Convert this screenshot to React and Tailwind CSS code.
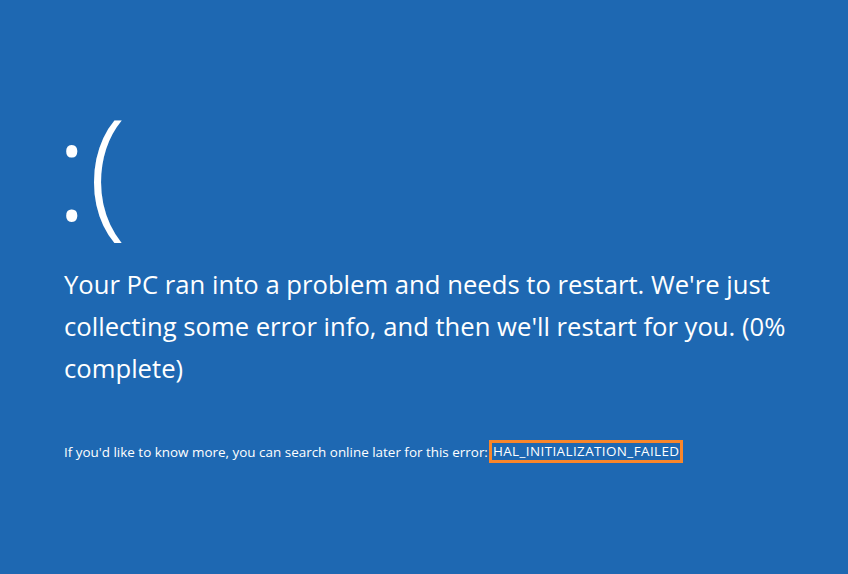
export default function App() {
  return (
    <div className="w-[848px] h-[574px] bg-[#1e68b2] text-white overflow-hidden" style={{ fontFamily: '"Open Sans", "Noto Sans", sans-serif' }}>
      <div className="pl-[55px] pt-[87px]">
        <div className="text-[140px] leading-[160px] font-light h-[177px]">:(</div>
      </div>
      <div className="pl-[64px] w-[820px]">
        <p className="text-[25.65px] leading-[42px] font-normal">
          Your PC ran into a problem and needs to restart. We're just collecting some error info, and then we'll restart for you. (0% complete)
        </p>
        <p className="mt-[50px] text-[13.45px] leading-[22px] flex items-center">
          <span>If you'd like to know more, you can search online later for this error:</span>
          <span className="ml-[1px] border-[3px] border-[#fa862a] px-[1px] leading-[17px] tracking-[0.4px]">HAL_INITIALIZATION_FAILED</span>
        </p>
      </div>
    </div>
  );
}
